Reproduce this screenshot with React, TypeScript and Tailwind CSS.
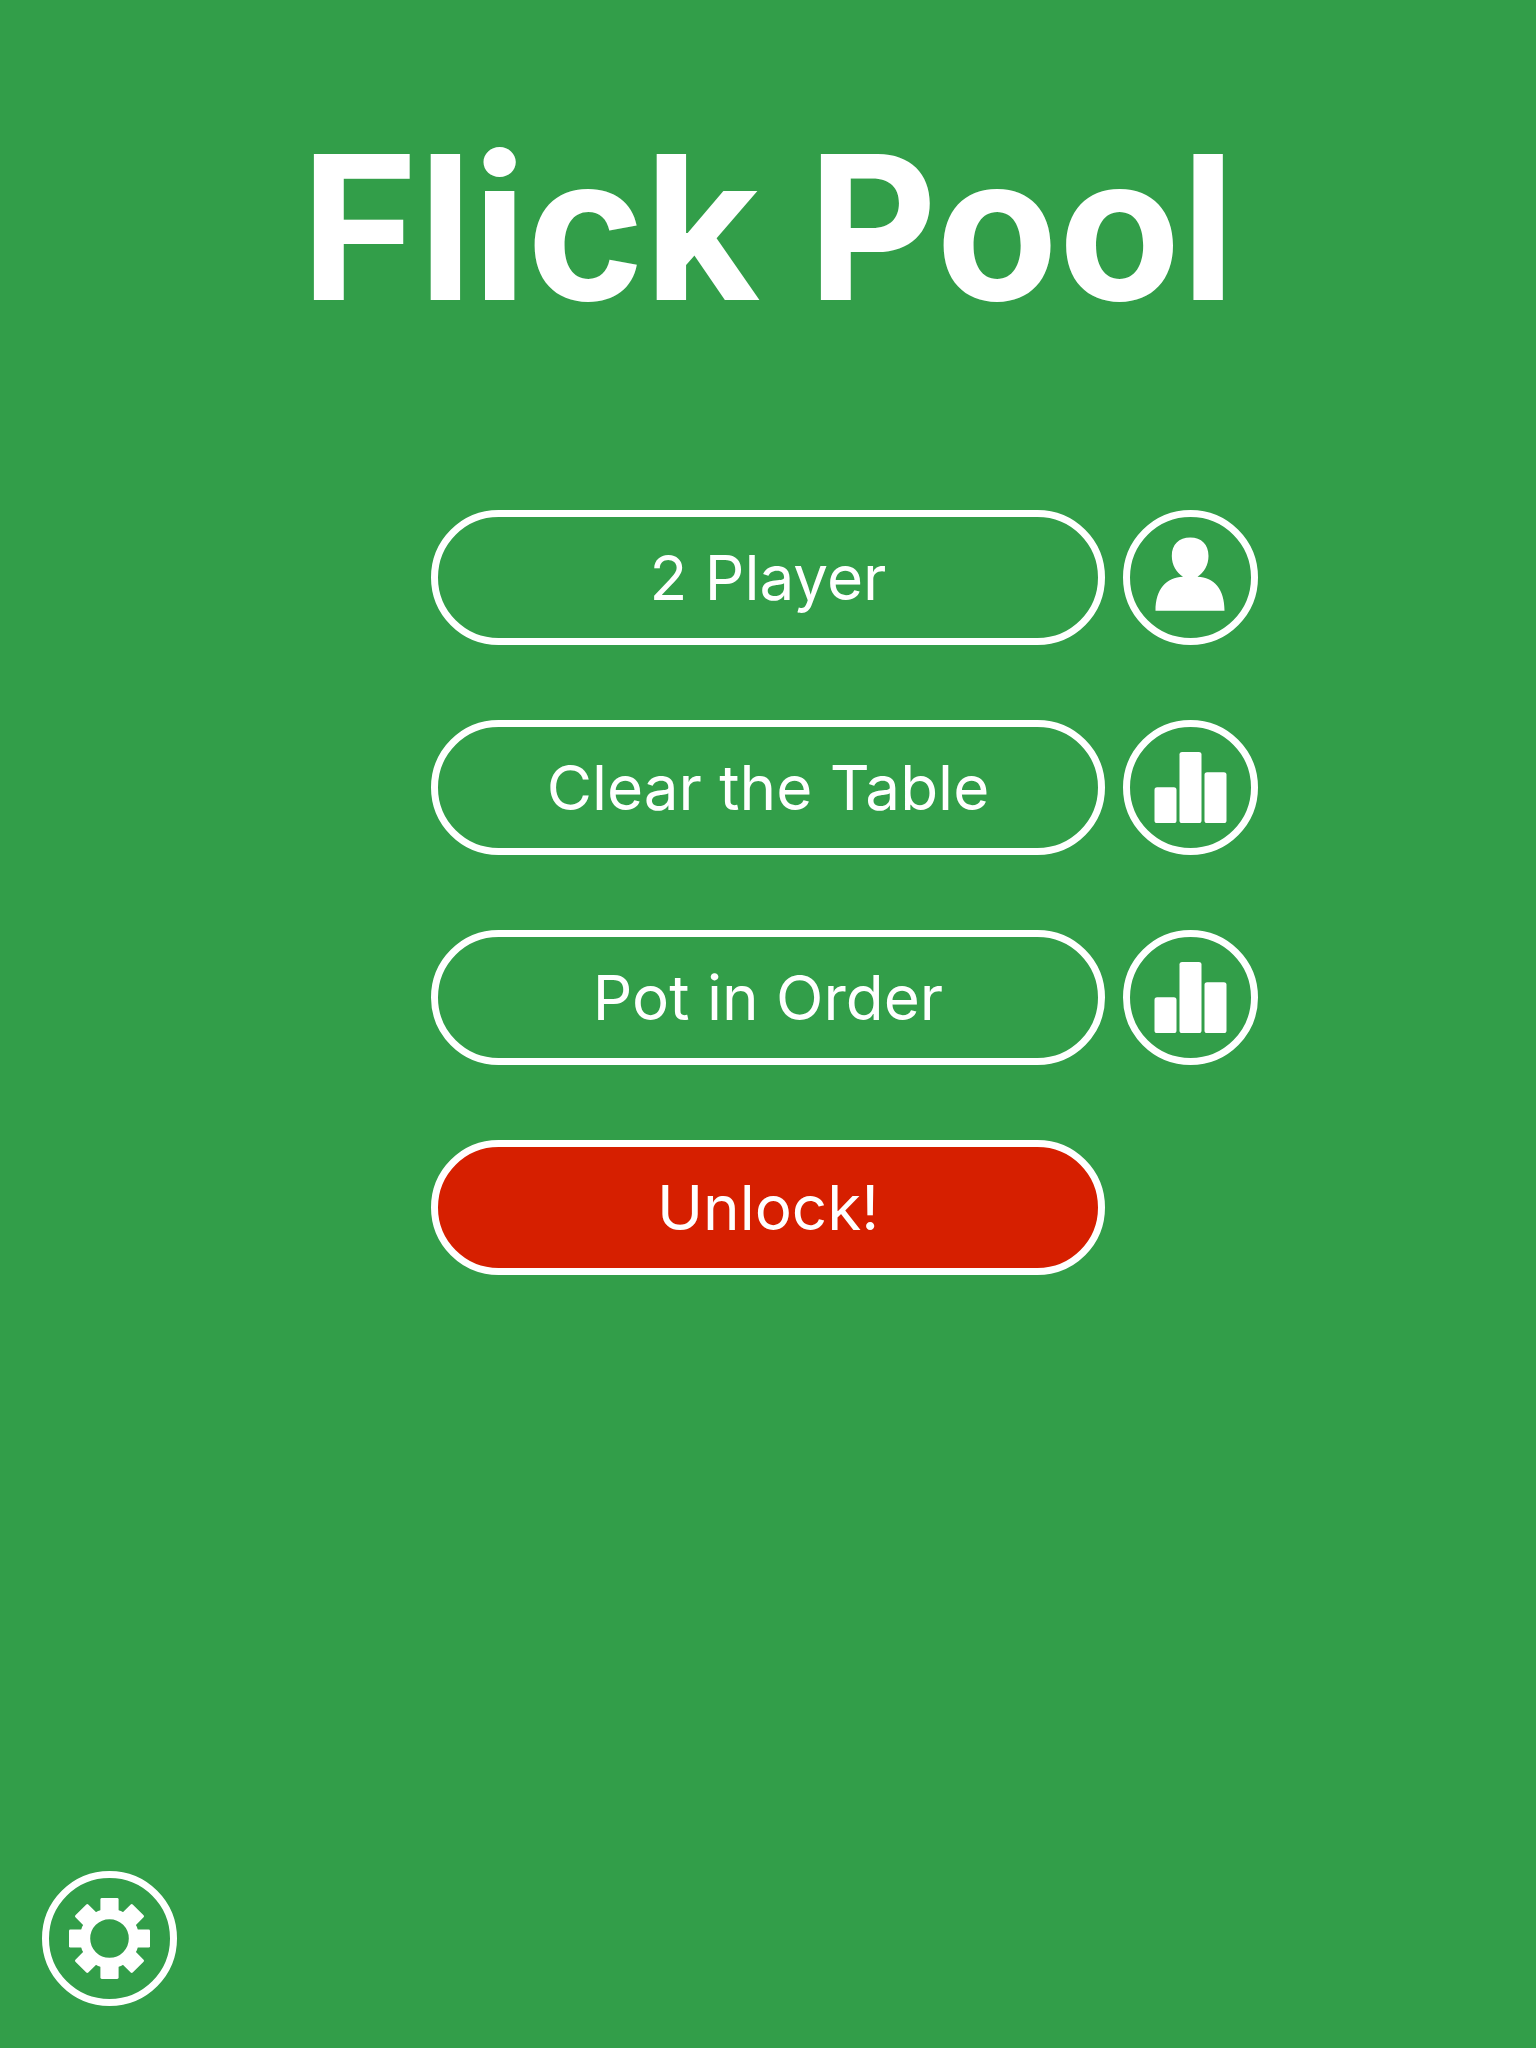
import React from "react";
import clsx from "clsx";

const teeth = [0, 45, 90, 135];

function PersonIcon() {
  return (
    <svg viewBox="7 7 121 121" className="size-full fill-current" aria-hidden="true">
      <path d="M67.2 27.6C78.5 27.6 85.5 34.5 85.5 46C85.5 55 81 62.5 74.5 66.7C91 67 101.5 79 101.5 100.7H32.5C32.5 79 43.5 67 60 66.7C53.5 62.5 48.8 55 48.8 46C48.8 34.5 56 27.6 67.2 27.6Z" />
    </svg>
  );
}

function ChartIcon() {
  return (
    <svg viewBox="7 7 121 121" className="size-full fill-current" aria-hidden="true">
      <rect x="31.5" y="67.3" width="22" height="35.7" rx="2.6" />
      <rect x="56.5" y="32" width="22" height="71" rx="2.6" />
      <rect x="81.5" y="52.2" width="22" height="50.8" rx="2.6" />
    </svg>
  );
}

function GearIcon() {
  return (
    <svg viewBox="7 7 121 121" className="size-full" aria-hidden="true">
      <circle cx="67.5" cy="67.5" r="24.5" fill="none" stroke="currentColor" strokeWidth="10.4" />
      {teeth.map((angle) => (
        <g key={angle} transform={`rotate(${angle} 67.5 67.5)`} fill="currentColor">
          <rect x="58.4" y="27" width="18.2" height="15" rx="1.4" />
          <rect x="58.4" y="93" width="18.2" height="15" rx="1.4" />
        </g>
      ))}
    </svg>
  );
}

const modes = [
  { title: "2 Player", action: "1 Player", icon: <PersonIcon /> },
  { title: "Clear the Table", action: "Clear the Table scores", icon: <ChartIcon /> },
  { title: "Pot in Order", action: "Pot in Order scores", icon: <ChartIcon /> },
  { title: "Unlock!", highlight: true },
];

function RoundButton({ label, children }: { label: string; children: React.ReactNode }) {
  return (
    <button
      type="button"
      aria-label={label}
      className="size-[135px] shrink-0 rounded-full border-[7px] border-white"
    >
      {children}
    </button>
  );
}

function App() {
  return (
    <main className="min-h-screen flex flex-col bg-[#329e49] text-white font-['Inter',sans-serif]">
      <h1 className="pt-[127px] text-center text-[200px] leading-none font-bold">
        Flick Pool
      </h1>
      <div className="mt-[183px] flex flex-col gap-[75px]">
        {modes.map((mode) => (
          <div
            key={mode.title}
            className="grid grid-cols-[1fr_674px_1fr] gap-[18px] items-center"
          >
            <button
              type="button"
              className={clsx(
                "col-start-2 h-[135px] rounded-full border-[7px] border-white text-[62px] leading-none",
                mode.highlight && "bg-[#d61f00]"
              )}
            >
              {mode.title}
            </button>
            {mode.action && <RoundButton label={mode.action}>{mode.icon}</RoundButton>}
          </div>
        ))}
      </div>
      <footer className="mt-auto flex p-[42px]">
        <RoundButton label="Settings">
          <GearIcon />
        </RoundButton>
      </footer>
    </main>
  );
}

export default App;
